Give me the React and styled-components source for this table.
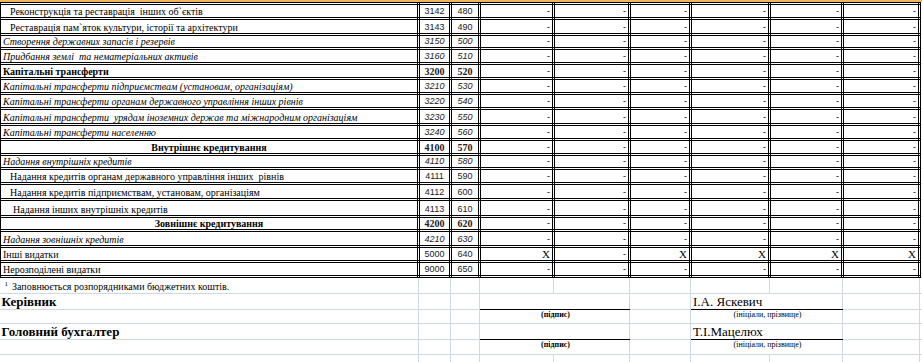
import React from "react";
import styled, { createGlobalStyle } from "styled-components";

const Global = createGlobalStyle`
  html, body { margin: 0; padding: 0; background: #fff; overflow: hidden; }
  body { width: 922px; height: 362px; }
`;

const Sheet = styled.div`
  width: 922px;
  height: 362px;
  overflow: hidden;
  background: #fff;
  display: flex;
  flex-direction: column;
`;

const HeaderEdge = styled.div`
  flex: none;
  height: 2px;
  background: #f1b560;
`;

const Grid = styled.table`
  flex: none;
  border-collapse: collapse;
  table-layout: fixed;
  width: 958px;
  margin-left: -2px;
  font-family: "Liberation Serif", "Times New Roman", serif;
  font-size: 10px;
  color: #000;
`;

const Row = styled.tr`
  height: ${(p) => p.$h}px;
`;

const Cell = styled.td`
  border: 3px double #000;
  padding: 0 2px;
  vertical-align: bottom;
  line-height: 11px;
  white-space: pre;
  overflow: hidden;
  font-family: "Liberation Serif", "Times New Roman", serif;
  font-size: 10px;
`;

const Label = styled(Cell)`
  padding-left: ${(p) => p.$indent || 2}px;
  font-style: ${(p) => (p.$kind === "italic" ? "italic" : "normal")};
  font-weight: ${(p) => (p.$kind === "bold" || p.$kind === "center" ? 700 : 400)};
  text-align: ${(p) => (p.$kind === "center" ? "center" : "left")};
`;

const Code = styled(Cell)`
  text-align: center;
  padding: 0;
  font-family: ${(p) =>
    p.$kind === "bold" || p.$kind === "center"
      ? '"Liberation Serif", "Times New Roman", serif'
      : '"Liberation Sans", Arial, sans-serif'};
  font-size: ${(p) => (p.$kind === "bold" || p.$kind === "center" ? 10 : 9)}px;
  font-weight: ${(p) => (p.$kind === "bold" || p.$kind === "center" ? 700 : 400)};
  font-style: ${(p) => (p.$kind === "italic" ? "italic" : "normal")};
  color: #222;
`;

const Value = styled(Cell)`
  text-align: right;
  padding: 0 2px 0 0;
  font-family: ${(p) =>
    p.$x ? '"Liberation Serif", "Times New Roman", serif' : '"Liberation Sans", Arial, sans-serif'};
  font-size: ${(p) => (p.$x ? 11 : 9)}px;
`;

const Spare = styled.td`
  border: none;
  border-bottom: 1px solid #d0d7e5;
`;

const Plain = styled.td`
  border: none;
  border-right: 1px solid #d0d7e5;
  border-bottom: 1px solid ${(p) => (p.$line ? "#000" : "#d0d7e5")};
  padding: 0 0 0 2px;
  white-space: pre;
  vertical-align: ${(p) => p.$valign || "bottom"};
  text-align: ${(p) => p.$align || "left"};
  font-family: "Liberation Serif", "Times New Roman", serif;
  font-size: ${(p) => p.$size || 10}px;
  font-weight: ${(p) => (p.$bold ? 700 : 400)};
  line-height: ${(p) => (p.$size ? p.$size + 2 : 12)}px;
  color: #000;
`;

const Sup = styled.sup`
  font-size: 7px;
  vertical-align: 4px;
  margin: 0 4px 0 3px;
`;

const widths = [419, 32, 29, 74, 76, 61, 79, 73, 77, 40];

const rows = [
  { label: "Реконструкція та реставрація  інших об`єктів", code: "3142", n: "480", kind: "indent", indent: 9, h: 15 },
  { label: "Реставрація пам`яток культури, історії та архітектури", code: "3143", n: "490", kind: "indent", indent: 9, h: 16 },
  { label: "Створення державних запасів і резервів", code: "3150", n: "500", kind: "italic", h: 14 },
  { label: "Придбання землі  та нематеріальних активів", code: "3160", n: "510", kind: "italic", h: 15 },
  { label: "Капітальні трансферти", code: "3200", n: "520", kind: "bold", h: 15 },
  { label: "Капітальні трансферти підприємствам (установам, організаціям)", code: "3210", n: "530", kind: "italic", h: 15 },
  { label: "Капітальні трансферти органам державного управління інших рівнів", code: "3220", n: "540", kind: "italic", h: 15 },
  { label: "Капітальні трансферти  урядам іноземних держав та міжнародним організаціям", code: "3230", n: "550", kind: "italic", h: 16 },
  { label: "Капітальні трансферти населенню", code: "3240", n: "560", kind: "italic", h: 15 },
  { label: "Внутрішнє кредитування", code: "4100", n: "570", kind: "center", h: 15 },
  { label: "Надання внутрішніх кредитів", code: "4110", n: "580", kind: "italic", h: 14 },
  { label: "Надання кредитів органам державного управління інших  рівнів", code: "4111", n: "590", kind: "indent", indent: 9, h: 15 },
  { label: "Надання кредитів підприємствам, установам, організаціям", code: "4112", n: "600", kind: "indent", indent: 9, h: 16 },
  { label: "Надання інших внутрішніх кредитів", code: "4113", n: "610", kind: "indent", indent: 12, h: 17 },
  { label: "Зовнішнє кредитування", code: "4200", n: "620", kind: "center", h: 14 },
  { label: "Надання зовнішніх кредитів", code: "4210", n: "630", kind: "italic", h: 16 },
  { label: "Інші видатки", code: "5000", n: "640", kind: "plain", h: 15, values: ["X", "-", "X", "X", "X", "X"] },
  { label: "Нерозподілені видатки", code: "9000", n: "650", kind: "plain", h: 15 },
];

const dashes = ["-", "-", "-", "-", "-", "-"];

function DataRow({ r }) {
  const vals = r.values || dashes;
  return (
    <Row $h={r.h}>
      <Label $kind={r.kind} $indent={r.indent}>{r.label}</Label>
      <Code $kind={r.kind}>{r.code}</Code>
      <Code $kind={r.kind}>{r.n}</Code>
      {vals.map((v, i) => (
        <Value key={i} $x={v === "X"}>{v}</Value>
      ))}
      <Spare />
    </Row>
  );
}

function Blank({ n }) {
  return Array.from({ length: n }, (_, i) => <Plain key={i} />);
}

export default function App() {
  return (
    <Sheet>
      <Global />
      <HeaderEdge />
      <Grid>
        <colgroup>
          {widths.map((w, i) => (
            <col key={i} style={{ width: w }} />
          ))}
        </colgroup>
        <tbody>
          {rows.map((r) => (
            <DataRow key={r.code} r={r} />
          ))}
          <Row $h={17}>
            <Plain $size={10}>
              <Sup>1</Sup>Заповнюється розпорядниками бюджетних коштів.
            </Plain>
            <Blank n={9} />
          </Row>
          <Row $h={15}>
            <Plain $bold $size={13}>Керівник</Plain>
            <Blank n={2} />
            <Plain colSpan={2} $line />
            <Plain />
            <Plain colSpan={2} $line $size={13}>І.А. Яскевич</Plain>
            <Blank n={2} />
          </Row>
          <Row $h={14}>
            <Plain />
            <Blank n={2} />
            <Plain colSpan={2} $align="center" $valign="top" $size={8} $bold>(підпис)</Plain>
            <Plain />
            <Plain colSpan={2} $align="center" $valign="top" $size={8}>(ініціали, прізвище)</Plain>
            <Blank n={2} />
          </Row>
          <Row $h={15}>
            <Plain $bold $size={13}>Головний бухгалтер</Plain>
            <Blank n={2} />
            <Plain colSpan={2} $line />
            <Plain />
            <Plain colSpan={2} $line $size={13}>Т.І.Мацелюх</Plain>
            <Blank n={2} />
          </Row>
          <Row $h={15}>
            <Plain />
            <Blank n={2} />
            <Plain colSpan={2} $align="center" $valign="top" $size={8} $bold>(підпис)</Plain>
            <Plain />
            <Plain colSpan={2} $align="center" $valign="top" $size={8}>(ініціали, прізвище)</Plain>
            <Blank n={2} />
          </Row>
          <Row $h={15}>
            <Blank n={10} />
          </Row>
        </tbody>
      </Grid>
    </Sheet>
  );
}
